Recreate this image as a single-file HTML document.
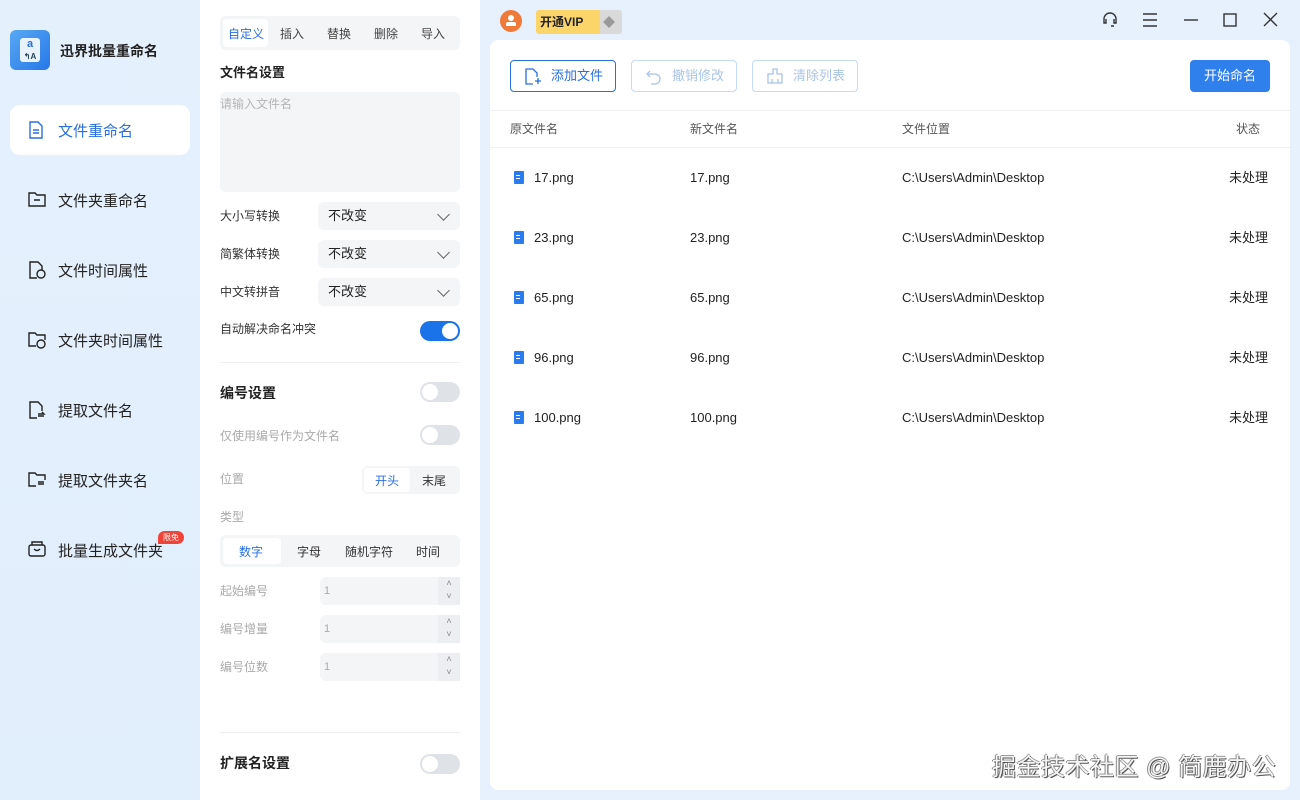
<!DOCTYPE html>
<html><head><meta charset="utf-8"><style>
*{box-sizing:border-box;margin:0;padding:0}
body{width:1300px;height:800px;overflow:hidden;background:#e6f1fd;font-family:"Liberation Sans","Noto Sans CJK SC",sans-serif;color:#222;position:relative}
.abs{position:absolute}
.side{left:0;top:0;width:200px;height:800px;background:linear-gradient(180deg,#e5f0fd,#e1eefc)}
.nav{position:absolute;left:10px;width:180px;height:50px;font-size:15px;display:flex;align-items:center;padding-left:48px;color:#222}
.nav svg{position:absolute;left:18px;top:16px}
.nav.act{background:#fff;border-radius:10px;color:#2a6fe0}
.mid{left:200px;top:0;width:280px;height:800px;background:#fff}
.lbl{position:absolute;left:20px;font-size:12px;color:#333;line-height:16px}
.gray{color:#aaa}
.sel{position:absolute;left:318px;width:142px;height:28px;background:#f4f5f7;border-radius:6px;font-size:13px;padding:0 10px;line-height:28px}
.sel:after{content:"";position:absolute;right:12px;top:8px;width:8px;height:8px;border-right:1.5px solid #666;border-bottom:1.5px solid #666;transform:rotate(45deg)}
.tog{position:absolute;left:420px;width:40px;height:20px;border-radius:10px;background:#dfe2e6}
.tog:after{content:"";position:absolute;left:2px;top:2px;width:16px;height:16px;border-radius:50%;background:#fff}
.tog.on{background:#1a73e8}.tog.on:after{left:22px}
.h{position:absolute;left:20px;font-size:14px;font-weight:bold;color:#222;line-height:16px}
.num{position:absolute;left:318px;width:140px;height:28px;background:#f4f5f7;border-radius:6px;font-size:11px;color:#aaa;padding:8px 4px}
.num i{position:absolute;right:0;top:0;width:22px;height:28px;background:#eceef1;font-style:normal;font-size:9px;color:#888;text-align:center;line-height:13px}
.card{left:490px;top:40px;width:800px;height:750px;background:#fff;border-radius:8px}
.btn{position:absolute;top:20px;height:32px;border:1px solid #2a6fe0;border-radius:4px;font-size:13px;color:#2a6fe0;padding-left:40px;line-height:30px}
.btn.dis{border-color:#c5daf3;color:#a9c4e8}
.th{position:absolute;top:81px;font-size:12px;color:#555;line-height:16px}
.row{position:absolute;left:0;width:800px;height:20px;font-size:13px;color:#222}
.row span{position:absolute;top:0;line-height:20px}
.fi{position:absolute;left:24px;top:3px;width:10px;height:13px;background:#2a7bef;border-radius:1px}
.fi:after{content:"";position:absolute;left:2px;top:4px;width:4px;height:1px;background:#fff;box-shadow:0 3px #fff}
</style></head><body>
<div class="abs side">
 <div class="abs" style="left:10px;top:30px;width:40px;height:40px;border-radius:6px;background:linear-gradient(135deg,#58a8f5,#2778e8)"><div style="position:absolute;left:10px;top:8px;width:20px;height:24px;background:#e9f3fd;border-radius:3px;font-size:11px;font-weight:bold;color:#2a6fe0;text-align:center;line-height:12px">a<br><span style="font-size:8px;color:#245">↰A</span></div></div>
 <div class="abs" style="left:60px;top:41px;font-size:14px;font-weight:bold">迅界批量重命名</div>
 <div class="nav act" style="top:105px"><svg width="16" height="18" viewBox="0 0 16 18" fill="none" stroke="#2a6fe0" stroke-width="1.4"><path d="M2 1h8l4 4v12H2z"/><path d="M5 9h6M5 12h6"/></svg>文件重命名</div>
 <div class="nav" style="top:175px"><svg width="18" height="16" viewBox="0 0 18 16" fill="none" stroke="#222" stroke-width="1.4"><path d="M1 2h6l2 2h8v11H1z M6 9h6"/></svg>文件夹重命名</div>
 <div class="nav" style="top:245px"><svg width="18" height="18" viewBox="0 0 18 18" fill="none" stroke="#222" stroke-width="1.4"><path d="M9 17H2V1h8l4 4v4"/><circle cx="13" cy="13" r="4"/></svg>文件时间属性</div>
 <div class="nav" style="top:315px"><svg width="18" height="18" viewBox="0 0 18 18" fill="none" stroke="#222" stroke-width="1.4"><path d="M8 15H1V2h6l2 2h8v5"/><circle cx="13" cy="13" r="4"/></svg>文件夹时间属性</div>
 <div class="nav" style="top:385px"><svg width="18" height="18" viewBox="0 0 18 18" fill="none" stroke="#222" stroke-width="1.4"><path d="M9 17H2V1h8l4 4v5M10 13h6l-2-2M16 15h-6"/></svg>提取文件名</div>
 <div class="nav" style="top:455px"><svg width="18" height="16" viewBox="0 0 18 16" fill="none" stroke="#222" stroke-width="1.4"><path d="M8 15H1V2h6l2 2h8v5M10 11h6M16 13h-6"/></svg>提取文件夹名</div>
 <div class="nav" style="top:525px"><svg width="18" height="16" viewBox="0 0 18 16" fill="none" stroke="#222" stroke-width="1.4"><rect x="1" y="4" width="16" height="11" rx="2"/><path d="M4 4V1h10v3M6 8q3 3 6 0"/></svg>批量生成文件夹</div>
 <div class="abs" style="left:158px;top:531px;width:26px;height:13px;border-radius:7px 7px 7px 0;background:#f04438;color:#fff;font-size:8px;text-align:center;line-height:13px">限免</div>
</div>
<div class="abs mid">
 <div class="abs" style="left:20px;top:16px;width:240px;height:34px;background:#f4f5f7;border-radius:6px"></div>
 <div class="abs" style="left:23px;top:19px;width:45px;height:28px;background:#fff;border-radius:4px"></div>
 <div class="abs" style="top:25px;left:28px;font-size:12px;color:#2a6fe0">自定义</div>
 <div class="abs" style="top:25px;left:80px;font-size:12px;color:#444">插入</div>
 <div class="abs" style="top:25px;left:127px;font-size:12px;color:#444">替换</div>
 <div class="abs" style="top:25px;left:174px;font-size:12px;color:#444">删除</div>
 <div class="abs" style="top:25px;left:221px;font-size:12px;color:#444">导入</div>
 <div class="h" style="top:65px;font-size:13px">文件名设置</div>
 <div class="abs" style="left:20px;top:92px;width:240px;height:100px;background:#f4f5f7;border-radius:6px;font-size:12px;color:#b5b5b5;padding:3px 0">请输入文件名</div>
 <div class="lbl" style="top:208px">大小写转换</div><div class="sel" style="left:118px;top:202px">不改变</div>
 <div class="lbl" style="top:246px">简繁体转换</div><div class="sel" style="left:118px;top:240px">不改变</div>
 <div class="lbl" style="top:284px">中文转拼音</div><div class="sel" style="left:118px;top:278px">不改变</div>
 <div class="lbl" style="top:321px">自动解决命名冲突</div><div class="tog on" style="left:220px;top:321px"></div>
 <div class="abs" style="left:20px;top:362px;width:240px;height:1px;background:#eceef1"></div>
 <div class="h" style="top:385px">编号设置</div><div class="tog" style="left:220px;top:382px"></div>
 <div class="lbl gray" style="top:428px">仅使用编号作为文件名</div><div class="tog" style="left:220px;top:425px"></div>
 <div class="lbl gray" style="top:471px">位置</div>
 <div class="abs" style="left:162px;top:466px;width:98px;height:28px;background:#f4f5f7;border-radius:5px"></div>
 <div class="abs" style="left:164px;top:468px;width:46px;height:24px;background:#fff;border-radius:4px"></div>
 <div class="abs" style="left:175px;top:472px;font-size:12px;color:#2a6fe0">开头</div>
 <div class="abs" style="left:222px;top:472px;font-size:12px;color:#333">末尾</div>
 <div class="lbl gray" style="top:509px">类型</div>
 <div class="abs" style="left:20px;top:535px;width:240px;height:32px;background:#f4f5f7;border-radius:6px"></div>
 <div class="abs" style="left:23px;top:538px;width:58px;height:26px;background:#fff;border-radius:4px"></div>
 <div class="abs" style="left:39px;top:543px;font-size:12px;color:#2a6fe0">数字</div>
 <div class="abs" style="left:97px;top:543px;font-size:12px;color:#333">字母</div>
 <div class="abs" style="left:145px;top:543px;font-size:12px;color:#333">随机字符</div>
 <div class="abs" style="left:216px;top:543px;font-size:12px;color:#333">时间</div>
 <div class="lbl gray" style="top:583px">起始编号</div><div class="num" style="left:120px;top:577px">1<i>˄<br>˅</i></div>
 <div class="lbl gray" style="top:621px">编号增量</div><div class="num" style="left:120px;top:615px">1<i>˄<br>˅</i></div>
 <div class="lbl gray" style="top:659px">编号位数</div><div class="num" style="left:120px;top:653px">1<i>˄<br>˅</i></div>
 <div class="abs" style="left:20px;top:732px;width:240px;height:1px;background:#eceef1"></div>
 <div class="h" style="top:755px">扩展名设置</div><div class="tog" style="left:220px;top:754px"></div>
</div>
<div class="abs" style="left:500px;top:10px;width:22px;height:22px;border-radius:50%;background:#f07a3a"><div style="position:absolute;left:8px;top:5px;width:6px;height:6px;border-radius:50%;background:#fff"></div><div style="position:absolute;left:6px;top:12px;width:10px;height:4px;background:#fff;border-radius:2px 2px 0 0"></div></div>
<div class="abs" style="left:536px;top:10px;width:86px;height:24px;background:#d9d9d9;border-radius:3px"></div>
<div class="abs" style="left:536px;top:10px;width:64px;height:24px;background:#fcd56a;border-radius:3px 0 0 3px;font-size:12px;font-weight:bold;padding:0 4px;line-height:24px">开通VIP</div>
<div class="abs" style="left:603px;top:16px;width:12px;height:12px;background:#999;transform:rotate(45deg) scale(.7)"></div>
<svg class="abs" style="left:1100px;top:10px" width="190" height="20" fill="none" stroke="#333" stroke-width="1.4"><path d="M4 13V9a6 6 0 0112 0v4M4 10v3h2v-4M16 10v3h-2v-4M14 16h-3"/><path d="M43 4h14M43 10h14M43 16h14"/><path d="M84 10h14"/><rect x="124" y="4" width="12" height="12"/><path d="M164 3l13 13M177 3l-13 13"/></svg>
<div class="abs card">
 <div class="btn" style="left:20px;width:106px"><svg class="abs" style="left:14px;top:7px" width="16" height="18" fill="none" stroke="#2a6fe0" stroke-width="1.3"><path d="M8 16H1V1h7l4 4v4M10 13h6M13 10v6"/></svg>添加文件</div>
 <div class="btn dis" style="left:141px;width:106px"><svg class="abs" style="left:14px;top:8px" width="16" height="16" fill="none" stroke="#a9c4e8" stroke-width="1.3"><path d="M4 2L1 5l3 3M1 5h8a5 5 0 010 10H5"/></svg>撤销修改</div>
 <div class="btn dis" style="left:262px;width:106px"><svg class="abs" style="left:14px;top:7px" width="16" height="16" fill="none" stroke="#a9c4e8" stroke-width="1.3"><path d="M6 1h4v5h5v9H1V6h5zM5 15v-4M11 15v-4"/></svg>清除列表</div>
 <div class="abs" style="left:700px;top:20px;width:80px;height:32px;background:#2f80ed;border-radius:4px;color:#fff;font-size:13px;text-align:center;line-height:32px">开始命名</div>
 <div class="abs" style="left:0;top:70px;width:800px;height:1px;background:#eef0f3"></div>
 <div class="th" style="left:20px">原文件名</div><div class="th" style="left:200px">新文件名</div><div class="th" style="left:412px">文件位置</div><div class="th" style="left:746px">状态</div>
 <div class="abs" style="left:0;top:107px;width:800px;height:1px;background:#eef0f3"></div>
 <div class="row" style="top:128px"><i class="fi"></i><span style="left:44px">17.png</span><span style="left:200px">17.png</span><span style="left:412px">C:\Users\Admin\Desktop</span><span style="left:739px">未处理</span></div>
 <div class="row" style="top:188px"><i class="fi"></i><span style="left:44px">23.png</span><span style="left:200px">23.png</span><span style="left:412px">C:\Users\Admin\Desktop</span><span style="left:739px">未处理</span></div>
 <div class="row" style="top:248px"><i class="fi"></i><span style="left:44px">65.png</span><span style="left:200px">65.png</span><span style="left:412px">C:\Users\Admin\Desktop</span><span style="left:739px">未处理</span></div>
 <div class="row" style="top:308px"><i class="fi"></i><span style="left:44px">96.png</span><span style="left:200px">96.png</span><span style="left:412px">C:\Users\Admin\Desktop</span><span style="left:739px">未处理</span></div>
 <div class="row" style="top:368px"><i class="fi"></i><span style="left:44px">100.png</span><span style="left:200px">100.png</span><span style="left:412px">C:\Users\Admin\Desktop</span><span style="left:739px">未处理</span></div>
</div>
<div class="abs" style="left:992px;top:747px;font-size:24px;color:#f4f4f4;text-shadow:1px 1px 0 #555,-1px 0 0 #888,0 -1px 0 #999;letter-spacing:0.5px">掘金技术社区 @ 简鹿办公</div>
</body></html>
